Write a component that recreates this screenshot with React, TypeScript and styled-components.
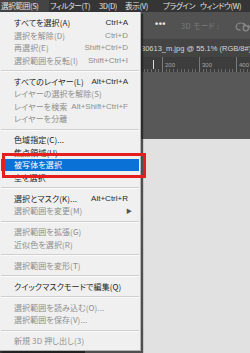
import React from 'react';
import styled, {createGlobalStyle} from 'styled-components';

const GlobalStyle = createGlobalStyle`
  html, body {
    margin: 0;
    padding: 0;
    background: #353535;
  }
  * {
    box-sizing: border-box;
  }
`;

const JP = `"Noto Sans CJK JP", "Noto Sans", sans-serif`;
const UI = `"Liberation Sans", "Noto Sans CJK JP", sans-serif`;

const Window = styled.div`
  position: relative;
  width: 250px;
  height: 353px;
  overflow: hidden;
  display: flex;
  flex-direction: column;
  font-family: ${JP};
  font-feature-settings: "palt";
`;

const MenuBar = styled.div`
  height: 12px;
  flex: none;
  display: flex;
  align-items: center;
  background: #353535;
`;

const BarItem = styled.div<{active?: boolean; w?: number}>`
  height: 12px;
  line-height: 12px;
  width: ${p => (p.w ? `${p.w}px` : 'auto')};
  flex: none;
  padding-left: 1px;
  font-size: 7.6px;
  letter-spacing: -0.35px;
  color: #e2e2e2;
  white-space: nowrap;
  background: ${p => (p.active ? '#444444' : 'transparent')};
`;

const Workspace = styled.div`
  flex: 1;
  display: flex;
  flex-direction: column;
`;

const Toolbar = styled.div`
  height: 27px;
  flex: none;
  display: flex;
  align-items: center;
  padding-left: 155px;
  background: #525252;
`;

const More = styled.div`
  width: 12px;
  font-family: ${UI};
  font-size: 9px;
  font-weight: bold;
  color: #e8e8e8;
  letter-spacing: 0.5px;
  line-height: 9px;
  margin-top: -3px;
`;

const ToolSep = styled.div`
  width: 1px;
  height: 17px;
  margin: 0 7px 0 8px;
  background: #444;
`;

const ModeLabel = styled.div`
  font-size: 7.5px;
  color: #7a7a7a;
  white-space: nowrap;
  letter-spacing: 0.4px;
`;

const OrbitIcon = styled.svg`
  margin-left: 14px;
  flex: none;
`;

const TabBar = styled.div`
  height: 18px;
  flex: none;
  display: flex;
  align-items: center;
  padding-left: 141px;
  background: #444444;
  font-family: ${UI};
  font-size: 7.5px;
  color: #d6d6d6;
  white-space: nowrap;
  overflow: hidden;
`;

const Ruler = styled.div`
  position: relative;
  height: 15px;
  flex: none;
  display: flex;
  padding-left: 125px;
  background-color: #3d3d3d;
  background-image: repeating-linear-gradient(
    to right,
    #6a6a6a 0 1px,
    transparent 1px 3.7px
  );
  background-size: 100% 3px;
  background-position: 125px 100%;
  background-repeat: repeat-x;
`;

const RulerMark = styled.div`
  width: 37px;
  flex: none;
  border-left: 1px solid #7a7a7a;
  padding: 5px 0 0 2px;
  font-family: ${UI};
  font-size: 6px;
  line-height: 7px;
  color: #a8a8a8;
`;

const Cursor = styled.div`
  position: absolute;
  left: 153px;
  top: 3px;
  width: 1px;
  height: 9px;
  background: #dcdcdc;
`;

const Pasteboard = styled.div`
  height: 67px;
  flex: none;
  background: #585858;
`;

const Canvas = styled.div`
  flex: 1;
  display: flex;
  flex-direction: column;
  justify-content: flex-end;
  background: #e1e1e1;
`;

const StatusStrip = styled.div`
  width: 85px;
  height: 4px;
  background: #333;
`;

const Dropdown = styled.div`
  position: absolute;
  left: 0;
  top: 12px;
  width: 141px;
  padding: 4.5px 0 3px;
  background: #f0f0f0;
  border-right: 1px solid #b4b4b4;
  border-bottom: 1px solid #b4b4b4;
  box-shadow: 2px 2px 1px rgba(30, 30, 30, 0.75);
  z-index: 2;
`;

const Item = styled.div<{off?: boolean; selected?: boolean}>`
  height: 12.5px;
  display: flex;
  align-items: center;
  padding: 0 11px 0 13px;
  margin: 0 1px 0 1px;
  font-size: 8px;
  letter-spacing: 0.1px;
  white-space: nowrap;
  color: ${p => (p.selected ? '#ffffff' : p.off ? '#8e8e8e' : '#1c1c1c')};
  background: ${p => (p.selected ? '#0a72d6' : 'transparent')};
`;

const Label = styled.span`
  flex: 1;
`;

const Shortcut = styled.span<{off?: boolean}>`
  font-family: ${UI};
  font-size: 8px;
  letter-spacing: 0;
  color: ${p => (p.off ? '#8e8e8e' : '#2a2a2a')};
`;

const Arrow = styled.span`
  font-size: 6px;
  color: #555;
  margin-right: -4px;
`;

const Separator = styled.div`
  height: 8.5px;
  display: flex;
  align-items: center;
  margin: 0 1px;
  &::after {
    content: '';
    flex: 1;
    height: 1px;
    background: #cfcfcf;
    box-shadow: 0 1px 0 #fafafa;
  }
`;

const Callout = styled.div`
  position: absolute;
  left: 2px;
  top: 153px;
  width: 144px;
  height: 25px;
  border: 3px solid #e51f1f;
  z-index: 3;
`;

type Entry =
  | {sep: true}
  | {label: string; keys?: string; off?: boolean; selected?: boolean; sub?: boolean};

const entries: Entry[] = [
  {label: 'すべてを選択(A)', keys: 'Ctrl+A'},
  {label: '選択を解除(D)', keys: 'Ctrl+D', off: true},
  {label: '再選択(E)', keys: 'Shift+Ctrl+D', off: true},
  {label: '選択範囲を反転(I)', keys: 'Shift+Ctrl+I', off: true},
  {sep: true},
  {label: 'すべてのレイヤー(L)', keys: 'Alt+Ctrl+A'},
  {label: 'レイヤーの選択を解除(S)', off: true},
  {label: 'レイヤーを検索', keys: 'Alt+Shift+Ctrl+F', off: true},
  {label: 'レイヤーを分離', off: true},
  {sep: true},
  {label: '色域指定(C)...'},
  {label: '焦点領域(U)...'},
  {label: '被写体を選択', selected: true},
  {label: '空を選択'},
  {sep: true},
  {label: '選択とマスク(K)...', keys: 'Alt+Ctrl+R'},
  {label: '選択範囲を変更(M)', off: true, sub: true},
  {sep: true},
  {label: '選択範囲を拡張(G)', off: true},
  {label: '近似色を選択(R)', off: true},
  {sep: true},
  {label: '選択範囲を変形(T)', off: true},
  {sep: true},
  {label: 'クイックマスクモードで編集(Q)'},
  {sep: true},
  {label: '選択範囲を読み込む(O)...', off: true},
  {label: '選択範囲を保存(V)...', off: true},
  {sep: true},
  {label: '新規 3D 押し出し(3)', off: true},
];

const menus = [
  {label: '選択範囲(S)', w: 49, active: true},
  {label: 'フィルター(T)', w: 49},
  {label: '3D(D)', w: 26},
  {label: '表示(V)', w: 38},
  {label: 'プラグイン', w: 37},
  {label: 'ウィンドウ(W)'},
];

const App: React.FC = () => {
  return (
    <Window>
      <GlobalStyle />
      <MenuBar>
        {menus.map(m => (
          <BarItem key={m.label} w={m.w} active={m.active}>
            {m.label}
          </BarItem>
        ))}
      </MenuBar>

      <Workspace>
        <Toolbar>
          <More>•••</More>
          <ToolSep />
          <ModeLabel>3D モード :</ModeLabel>
          <OrbitIcon width="18" height="12" viewBox="0 0 18 12" fill="none" stroke="#8a8a8a" strokeWidth="1.2">
            <path d="M3 7.5c0-2.5 2.2-4.5 5-4.5 1.6 0 3 .6 3.9 1.6" />
            <path d="M3 7.5c.6 1.6 2.4 2.6 4.5 2.6" />
            <path d="M10.5 3.2l1.6 1.5-2 .6" />
            <circle cx="12.8" cy="8.2" r="2.6" />
            <path d="M15 5.2c1.2.6 1.8 1.6 1.6 2.8" />
          </OrbitIcon>
        </Toolbar>

        <TabBar>30613_m.jpg @ 55.1% (RGB/8#)</TabBar>

        <Ruler>
          <RulerMark>100</RulerMark>
          <RulerMark>200</RulerMark>
          <RulerMark>300</RulerMark>
          <RulerMark>400</RulerMark>
          <Cursor />
        </Ruler>

        <Pasteboard />

        <Canvas>
          <StatusStrip />
        </Canvas>
      </Workspace>

      <Dropdown>
        {entries.map((e, i) =>
          'sep' in e ? (
            <Separator key={i} />
          ) : (
            <Item key={i} off={e.off} selected={e.selected}>
              <Label>{e.label}</Label>
              {e.keys ? <Shortcut off={e.off}>{e.keys}</Shortcut> : null}
              {e.sub ? <Arrow>▶</Arrow> : null}
            </Item>
          )
        )}
      </Dropdown>

      <Callout />
    </Window>
  );
};

export default App;
